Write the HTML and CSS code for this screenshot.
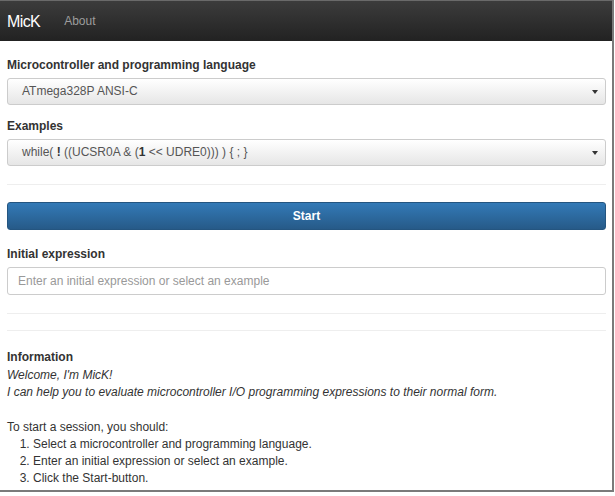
FILE: index.html
```html
<!DOCTYPE html>
<html>
<head>
<meta charset="utf-8">
<link rel="stylesheet" href="styles.css">
</head>
<body>
<div class="frame">
  <nav class="navbar">
    <span class="brand">MicK</span>
    <span class="nav-link">About</span>
  </nav>
  <main class="content">
    <div class="group">
      <label class="label">Microcontroller and programming language</label>
      <div class="select"><span>ATmega328P ANSI-C</span><span class="caret"></span></div>
    </div>
    <div class="group">
      <label class="label">Examples</label>
      <div class="select"><span>while( <b>!</b> ((UCSR0A &amp; (<b>1</b> &lt;&lt; UDRE0))) ) { ; }</span><span class="caret"></span></div>
    </div>
    <hr class="rule rule-a">
    <button class="btn">Start</button>
    <div class="group">
      <label class="label">Initial expression</label>
      <div class="input">Enter an initial expression or select an example</div>
    </div>
    <hr class="rule rule-b">
    <hr class="rule rule-c">
    <section class="info">
      <h4 class="label">Information</h4>
      <p class="em">Welcome, I'm MicK!<br>I can help you to evaluate microcontroller I/O programming expressions to their normal form.</p>
      <p class="plain">To start a session, you should:</p>
      <ol class="steps">
        <li>Select a microcontroller and programming language.</li>
        <li>Enter an initial expression or select an example.</li>
        <li>Click the Start-button.</li>
      </ol>
    </section>
  </main>
</div>
</body>
</html>
```
FILE: styles.css
```css
* { box-sizing: border-box; }
html, body { margin: 0; padding: 0; background: #fff; }
body {
  font-family: "Liberation Sans", Arial, sans-serif;
  font-size: 12px;
  line-height: 17px;
  color: #333;
}
.frame {
  width: 614px;
  height: 492px;
  border-right: 2px solid #7a7a7a;
  border-bottom: 2px solid #7a7a7a;
  overflow: hidden;
}
.navbar {
  height: 41px;
  background: linear-gradient(#3c3c3c, #222);
  border-top: 1px solid #6a6a6a;
  display: flex;
  align-items: center;
  padding-left: 7px;
  gap: 24px;
}
.brand {
  color: #fff;
  font-size: 16px;
  letter-spacing: -0.6px;
}
.nav-link {
  color: #9d9d9d;
  font-size: 12px;
}
.content {
  padding: 16px 6px 0 7px;
}
.group { display: flex; flex-direction: column; }
.label {
  display: block;
  font-weight: bold;
  font-size: 12px;
  line-height: 17px;
  margin: 0 0 4px 0;
}
.select {
  height: 27px;
  border: 1px solid #ccc;
  border-radius: 3px;
  background: linear-gradient(#fff, #e6e6e6);
  display: flex;
  align-items: center;
  justify-content: space-between;
  padding: 0 7px 0 14px;
  color: #555;
  margin-bottom: 13px;
}
.select b { font-weight: bold; color: #333; }
.caret {
  width: 0;
  height: 0;
  border-left: 3px solid transparent;
  border-right: 3px solid transparent;
  border-top: 4px solid #333;
}
.rule {
  border: 0;
  border-top: 1px solid #eee;
  margin: 0;
}
.rule-a { margin: 5px 0 17px; }
.btn {
  display: block;
  width: 100%;
  height: 28px;
  border: 1px solid #245580;
  border-radius: 3px;
  background: linear-gradient(#337ab7, #265a88);
  color: #fff;
  font-family: inherit;
  font-size: 12px;
  font-weight: bold;
  margin-bottom: 16px;
  padding: 0;
}
.input {
  height: 28px;
  border: 1px solid #ccc;
  border-radius: 3px;
  background: #fff;
  color: #999;
  display: flex;
  align-items: center;
  padding-left: 10px;
}
.rule-b { margin-top: 18px; }
.rule-c { margin-top: 16px; }
.info { padding-top: 18px; }
.info .label { margin: 0 0 1px; }
.em { font-style: italic; margin: 0 0 18px; }
.plain { margin: 0; }
.steps { margin: 0; padding-left: 26px; }
```
